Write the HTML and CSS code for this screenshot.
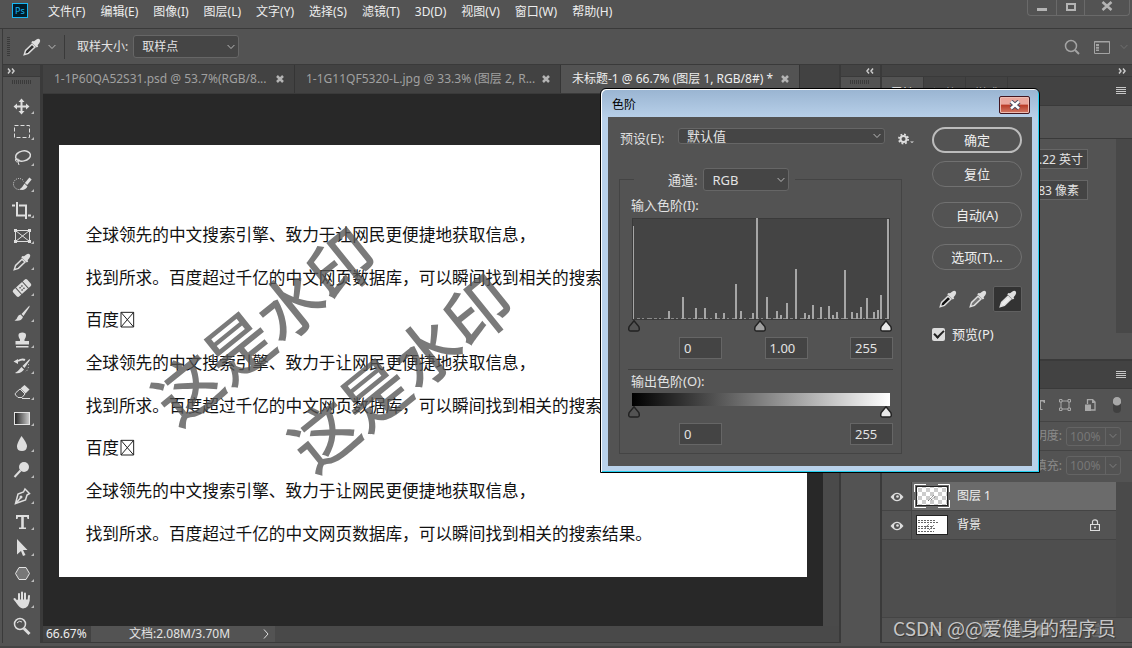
FILE: index.html
```html
<!DOCTYPE html>
<html lang="zh-CN">
<head>
<meta charset="utf-8">
<title>Photoshop</title>
<link rel="stylesheet" href="styles.css">
</head>
<body>
<svg class="defs" width="0" height="0" aria-hidden="true">
  <symbol id="dropper" viewBox="0 0 18 18">
    <path class="fill" d="M11 3.2 13.4 1.4Q15.600 .2 16.800 1.600 17.800 3 16.400 5L14.600 7.200 15.200 8.400 13.800 9.600 8.200 4.200 9.600 2.900Z"/>
    <path class="tube" d="M9 6.200 2.600 12.400 1.300 16.600 5.400 15.400 12 9Z"/>
  </symbol>
  <symbol id="chevron" viewBox="0 0 8 6"><path class="line" d="M.6 1 4 4.500 7.400 1"/></symbol>
  <symbol id="lines" viewBox="0 0 10 8"><path class="line" d="M0 .5H10M0 2.500H10M0 4.500H10M0 6.500H10"/></symbol>
  <symbol id="cross" viewBox="0 0 8 8"><path class="heavy" d="M1 1 7 7M7 1 1 7"/></symbol>
  <symbol id="double" viewBox="0 0 8 6"><path class="heavy thin" d="M1 .5 3 3 1 5.500M5 .5 7 3 5 5.500"/></symbol>
  <symbol id="eye" viewBox="0 0 14 10"><path class="fill" d="M.5 5Q7-3.500 13.500 5 7 13.500 .5 5Z"/><circle cx="7" cy="5" r="3" fill="#535353"/><circle class="fill" cx="7.500" cy="4.500" r="1.300"/></symbol>
  <symbol id="grip" viewBox="0 0 20 4"><path d="M.5 0V4M2.500 0V4M4.500 0V4M6.500 0V4M8.500 0V4M10.500 0V4M12.500 0V4M14.500 0V4M16.500 0V4M18.500 0V4" stroke="#3a3a3a"/></symbol>
  <symbol id="handle" viewBox="0 0 12 12"><path d="M6 .8 10.800 6.500Q12.200 11 9.500 11H2.500Q-.2 11 1.200 6.500Z"/></symbol>
</svg>

<div class="app">
  <header class="menubar">
    <svg class="logo" viewBox="0 0 16 15" role="img" aria-label="Photoshop"><rect x=".5" y=".5" width="15" height="14" fill="#001d2b" stroke="#18b8f5"/><text x="3" y="11">Ps</text></svg>
    <nav class="menus">
      <button>文件(F)</button><button>编辑(E)</button><button>图像(I)</button><button>图层(L)</button><button>文字(Y)</button><button>选择(S)</button><button>滤镜(T)</button><button>3D(D)</button><button>视图(V)</button><button>窗口(W)</button><button>帮助(H)</button>
    </nav>
    <div class="winbtns">
      <button aria-label="最小化"><svg viewBox="0 0 12 12"><path d="M1 8H11V11H1Z" fill="#b4b4b4"/></svg></button>
      <button aria-label="最大化"><svg viewBox="0 0 12 12"><path d="M2 4H10V10H2Z" fill="none" stroke="#b4b4b4" stroke-width="2"/></svg></button>
      <button class="wide" aria-label="关闭"><svg viewBox="0 0 12 12"><path d="M1.500 2 10.500 10M10.500 2 1.500 10" stroke="#b4b4b4" stroke-width="2.500"/></svg></button>
    </div>
  </header>

  <div class="options">
    <span class="vgrip"></span>
    <svg class="i18 cur" aria-hidden="true"><use href="#dropper"/></svg>
    <svg class="chev" aria-hidden="true"><use href="#chevron"/></svg>
    <span class="vsep"></span>
    <label for="sample">取样大小:</label>
    <span class="pick sample"><select id="sample"><option>取样点</option></select><svg class="chev"><use href="#chevron"/></svg></span>
    <span class="grow"></span>
    <button class="plain" aria-label="搜索"><svg class="i16" viewBox="0 0 16 16"><circle cx="7" cy="7" r="5.500" fill="none" stroke="#a3a3a3" stroke-width="1.500"/><path d="M11 11 15 15" stroke="#a3a3a3" stroke-width="2"/></svg></button>
    <button class="plain" aria-label="工作区"><svg class="i16" viewBox="0 0 16 16"><path d="M.5 2.500H15.500V14.500H.5ZM0 3H16" fill="none" stroke="#a3a3a3"/><path d="M3.500 5V12" stroke="#a3a3a3" stroke-width="3" stroke-dasharray="2 .7"/></svg></button>
    <svg class="chev dim" aria-hidden="true"><use href="#chevron"/></svg>
  </div>

  <main class="work">
    <aside class="tools">
      <div class="strip"><svg class="dbl"><use href="#double"/></svg></div>
      <svg class="grip"><use href="#grip"/></svg>
      <button class="tool" aria-label="移动"><svg viewBox="0 0 37 26"><path class="line w2" d="M18.500 8V20M12.500 13.500H24.500"/><path class="fill" d="M18.500 5.500 21.500 9H15.500ZM18.500 21.500 21.500 18H15.500ZM10.500 13.500 14 10.500V16.500ZM26.500 13.500 23 10.500V16.500Z"/></svg></button>
      <button class="tool" aria-label="矩形选框"><svg viewBox="0 0 37 26"><path class="line" stroke-dasharray="4 2" d="M11.500 6.500H26.500V18.500H11.500Z"/></svg></button>
      <button class="tool" aria-label="套索"><svg viewBox="0 0 37 26"><ellipse class="line w15" cx="20" cy="11" rx="7.500" ry="5" transform="rotate(-12 20 11)"/><path class="line" d="M12 14.500Q17 13 16 16 13 18 12.500 15M15 17 16 20"/></svg></button>
      <button class="tool" aria-label="快速选择"><svg viewBox="0 0 37 26"><circle class="line" cx="16" cy="13" r="5.500" stroke-dasharray="1 1.200"/><path class="halo" d="M28 7 21 15"/><path class="line w3" d="M27.500 7.500 23 13"/><path class="fill" d="M21.500 12.500 24.500 15.500Q22 20 16.500 18.500 19 17 21.500 12.500Z"/></svg></button>
      <button class="tool" aria-label="裁剪"><svg viewBox="0 0 37 26"><path class="line w2" d="M9 8.500H12M14 5V18.500H24M16 8.500H23V22M25 18.500H28"/></svg></button>
      <button class="tool" aria-label="图框"><svg viewBox="0 0 37 26"><path class="line" d="M12.500 7.500H26.500V18.500H12.500ZM12.500 7.500 26.500 18.500M26.500 7.500 12.500 18.500"/><path class="fill" d="M11 6H14V9H11ZM25 6H28V9H25ZM11 17H14V20H11ZM25 17H28V20H25Z"/></svg></button>
      <button class="tool" aria-label="吸管"><svg viewBox="0 0 37 26"><use href="#dropper" x="10" y="4" width="18" height="18"/></svg></button>
      <button class="tool" aria-label="修复画笔"><svg viewBox="0 0 37 26"><g transform="rotate(-42 19 13)"><rect class="fill" x="9.500" y="8.500" width="19" height="9" rx="2"/><path d="M14.500 8V18M23.500 8V18" stroke="#535353"/><path d="M17 11.500H21M17 14.500H21" stroke="#535353" stroke-width="1.500" stroke-dasharray="1.500 1"/></g></svg></button>
      <button class="tool" aria-label="画笔"><svg viewBox="0 0 37 26"><path class="fill" d="M26.500 4.500 18.500 13 20.500 15 26.500 6ZM17.500 13.500 20 16Q18 21 11.500 19.500 14 18.500 14.500 16 15.500 13.500 17.500 13.500Z"/></svg></button>
      <button class="tool" aria-label="仿制图章"><svg viewBox="0 0 37 26"><path class="fill" d="M17 12.500Q14.500 8.500 16 6.500 19.500 4.500 22.500 6.500 24 8.500 21.500 12.500V14H26V17.500H12.500V14H17ZM13 19H25.500V20.500H13Z"/></svg></button>
      <button class="tool" aria-label="历史记录画笔"><svg viewBox="0 0 37 26"><path class="line w2" d="M15 8Q19 5.500 22 7"/><path class="fill" d="M10.500 8.500 15 6V11ZM26.500 6 19.500 13 21.500 15 27 7ZM18.500 14 21 16.500Q18 21 12 20 15 18.500 18.500 14Z"/><path class="line" stroke-dasharray="1 2" d="M25.500 11Q26 17 22 19"/></svg></button>
      <button class="tool" aria-label="橡皮擦"><svg viewBox="0 0 37 26"><path class="fill" d="M21.500 6 26.500 10.500 22.500 14.500 17.500 9.500Z"/><path class="line" d="M17 10 22 15 19 18.500H15L12.500 16Q11.500 15 13 13.500ZM19 19.500H27"/></svg></button>
      <button class="tool" aria-label="渐变"><svg viewBox="0 0 37 26"><defs><linearGradient id="gt"><stop offset="0" stop-color="#222"/><stop offset="1" stop-color="#ccc"/></linearGradient></defs><rect x="11.500" y="7.500" width="15" height="12" fill="url(#gt)" stroke="#e3e3e3"/></svg></button>
      <button class="tool" aria-label="模糊"><svg viewBox="0 0 37 26"><path class="fill" d="M18.500 5Q24 12 24 15.500 23.500 20 19 20 14 20 14 15.500 14 12 18.500 5Z"/></svg></button>
      <button class="tool" aria-label="减淡"><svg viewBox="0 0 37 26"><circle class="fill" cx="21" cy="10" r="5"/><path class="line w2" d="M17.500 13.500 11.500 20"/></svg></button>
      <button class="tool" aria-label="钢笔"><svg viewBox="0 0 37 26"><path class="line w15" d="M22 6 26.500 10.500 24 12 22.500 17 12.500 20.500 15 11 20.500 9ZM13 20 17.500 15"/><circle class="fill" cx="18" cy="14" r="1.500"/></svg></button>
      <button class="tool" aria-label="文字"><svg viewBox="0 0 37 26"><path class="fill" d="M13 6H26V10H24.500L24 8H20.800V18.500H23V20H16V18.500H18.200V8H15L14.500 10H13Z"/></svg></button>
      <button class="tool" aria-label="路径选择"><svg viewBox="0 0 37 26"><path class="fill" d="M14 4 24.500 15H20L22.500 20 20 21 18 16 14 19.500Z"/></svg></button>
      <button class="tool" aria-label="多边形"><svg viewBox="0 0 37 26"><path d="M16 6.500H23L26.500 12.500 23 18.500H16L12.500 12.500Z" fill="#777" stroke="#e3e3e3"/></svg></button>
      <button class="tool" aria-label="抓手"><svg viewBox="0 0 37 26"><path class="line w2 round" d="M16 14V7M19 14V5.500M22 14V6.500M25.500 14 26 9M15 16 11.500 12"/><path class="fill" d="M14.800 12.500H26.500Q26.500 21 20 21.500 16.500 21.500 12.500 14.500Z"/></svg></button>
      <button class="tool last" aria-label="缩放"><svg viewBox="0 0 37 26"><circle class="line w15" cx="17" cy="11" r="5.500"/><path class="line" d="M14 10Q16 7 19 9"/><path class="line w3" d="M21 15.500 26.500 21"/></svg></button>
    </aside>

    <section class="doc">
      <div class="tabs">
        <div class="tab t1"><span>1-1P60QA52S31.psd @ 53.7%(RGB/8...</span><button aria-label="关闭"><svg><use href="#cross"/></svg></button></div>
        <div class="tab t2"><span>1-1G11QF5320-L.jpg @ 33.3% (图层 2, R...</span><button aria-label="关闭"><svg><use href="#cross"/></svg></button></div>
        <div class="tab t3 on"><span>未标题-1 @ 66.7% (图层 1, RGB/8#) *</span><button aria-label="关闭"><svg><use href="#cross"/></svg></button></div>
      </div>
      <div class="stage">
        <div class="canvas">
          <svg class="paper" viewBox="0 0 1122 648">
            <rect width="1122" height="648" fill="#fff"/>
            <g class="body">
              <text x="40" y="144">全球领先的中文搜索引擎、致力于让网民更便捷地获取信息，</text>
              <text x="40" y="208">找到所求。百度超过千亿的中文网页数据库，可以瞬间找到相关的搜索结果。</text>
              <text x="40" y="272">百度</text>
              <text x="40" y="336">全球领先的中文搜索引擎、致力于让网民更便捷地获取信息，</text>
              <text x="40" y="400">找到所求。百度超过千亿的中文网页数据库，可以瞬间找到相关的搜索结果。</text>
              <text x="40" y="464">百度</text>
              <text x="40" y="528">全球领先的中文搜索引擎、致力于让网民更便捷地获取信息，</text>
              <text x="40" y="592">找到所求。百度超过千亿的中文网页数据库，可以瞬间找到相关的搜索结果。</text>
            </g>
            <path class="missing" d="M93 251H112V273H93ZM93 251 112 273M112 251 93 273M93 443H112V465H93ZM93 443 112 465M112 443 93 465"/>
            <g class="mark">
              <text transform="translate(178 426) rotate(-39)">这是水印</text>
              <text transform="translate(383 496) rotate(-39)">这是水印</text>
            </g>
          </svg>
        </div>
        <div class="vscroll"></div>
      </div>
      <footer class="status">
        <span class="zoom">66.67%</span>
        <button class="info"><span>文档:2.08M/3.70M</span><svg viewBox="0 0 6 10"><path class="line" d="M1 .5 5 5 1 9.500"/></svg></button>
      </footer>
    </section>

    <aside class="dock">
      <div class="strip end"><svg class="dbl back"><use href="#double"/></svg></div>
      <svg class="grip"><use href="#grip"/></svg>
    </aside>

    <aside class="panels">
      <div class="strip end"><svg class="dbl"><use href="#double"/></svg></div>
      <div class="ptabs"><button class="on">属性</button><button>调整</button><button>样式</button><svg class="lines"><use href="#lines"/></svg></div>
      <div class="props">
        <div class="phead"></div>
        <div class="pbody">
          <div class="fields"><input aria-label="宽度" value="38.22 英寸"><input class="px" aria-label="宽度像素" value="2883 像素"></div>
          <div class="pscroll"></div>
        </div>
      </div>
      <div class="ptabs second"><svg class="lines"><use href="#lines"/></svg></div>
      <div class="filters">
        <svg viewBox="0 0 12 12"><path d="M1 1H11V4H10L9 2.500H7V10H8.500V11H3.500V10H5V2.500H3L2 4H1Z" fill="#a8a8a8"/></svg>
        <svg viewBox="0 0 12 12"><path d="M2 2H10V10H2Z" fill="none" stroke="#a8a8a8"/><path d="M.5 .5H3V3H.5ZM9 .5H11.500V3H9ZM.5 9H3V11.500H.5ZM9 9H11.500V11.500H9Z" fill="#535353" stroke="#a8a8a8"/></svg>
        <svg viewBox="0 0 12 12"><path d="M3.500 5V.5H8.500L11 3V11H7" fill="none" stroke="#a8a8a8" stroke-width="1.300"/><path d="M1 5.500H7V12H1ZM8 0 11.500 4H8Z" fill="#a8a8a8"/></svg>
        <span class="toggle"></span>
      </div>
      <div class="prop"><label for="op">不透明度:</label><span class="pct"><input id="op" value="100%" disabled><svg class="chev"><use href="#chevron"/></svg></span></div>
      <div class="prop fillrow"><label for="fi">填充:</label><span class="pct"><input id="fi" value="100%" disabled><svg class="chev"><use href="#chevron"/></svg></span></div>
      <div class="layers">
        <div class="list">
          <div class="layer sel"><span class="see"><svg><use href="#eye"/></svg></span><div class="name">
            <svg class="thumb" viewBox="0 0 36 24"><defs><pattern id="chk" width="8" height="8" patternUnits="userSpaceOnUse"><rect width="8" height="8" fill="#fff"/><path d="M0 0H4V4H0ZM4 4H8V8H4Z" fill="#ccc"/></pattern></defs><rect x="2.500" y="2.500" width="31" height="19" fill="url(#chk)" stroke="#222"/><path d="M14 17 20 11M17 16 22 12" stroke="#777" stroke-dasharray="2 1"/><path d="M.5 8V.5H12M24 .5H35.500V8M35.500 16V23.500H24M12 23.500H.5V16" fill="none" stroke="#fff"/></svg>
            <span>图层 1</span></div></div>
          <div class="layer"><span class="see"><svg><use href="#eye"/></svg></span><div class="name">
            <svg class="thumb" viewBox="0 0 36 24"><rect x="2.500" y="2.500" width="31" height="19" fill="#fff" stroke="#222"/><path d="M4 7.500H21M4 9.500H24M4 13.500H18M4 15.500H21M4 18.500H20" stroke="#666" stroke-dasharray="2 1"/><path d="M10 16 15 11M15 17 20 12" stroke="#888"/></svg>
            <span>背景</span><svg class="lock" viewBox="0 0 10 12"><path d="M.5 5.500H9.500V11.500H.5ZM2.500 5V3Q2.500 .8 5 .8T7.500 3V5" fill="none" stroke="#ddd" stroke-width="1.200"/><circle cx="5" cy="8.500" r="1" fill="#ddd"/></svg></div></div>
        </div>
        <div class="lscroll"></div>
      </div>
      <footer class="pfoot">
        <svg viewBox="0 0 16 14"><path d="M7 4H4Q1 4 1 7T4 10H7M9 4H12Q15 4 15 7T12 10H9M5 7H11"/></svg>
        <svg viewBox="0 0 16 14"><path d="M1 13Q4 13 5 7T9 1M2 6H8M9 6 14 12M14 6 8 12"/></svg>
        <svg viewBox="0 0 16 14"><path class="solid" d="M1 1H15V13H1Z"/><circle cx="8" cy="7" r="3" fill="#535353"/></svg>
        <svg viewBox="0 0 16 14"><circle cx="8" cy="7" r="6"/><path class="solid" d="M3 11 12 2Q16 8 11 12 6 14 3 11Z"/></svg>
        <svg viewBox="0 0 16 14"><path class="solid" d="M1 12V2H6L8 4H15V12Z"/></svg>
        <svg viewBox="0 0 16 14"><path d="M2 1H14V13H2ZM8 4V10M5 7H11"/></svg>
        <svg viewBox="0 0 16 14"><path d="M3 3H13M4 3V13H12V3M6 1H10M7 5V11M9 5V11"/></svg>
      </footer>
    </aside>
  </main>
  <div class="base"></div>
  <div class="credit">CSDN @@爱健身的程序员</div>

  <div class="dialog" role="dialog" aria-label="色阶">
    <div class="title"><span>色阶</span><button class="dclose" aria-label="关闭"><svg viewBox="0 0 12 10"><path d="M2 1.500 10 8.500M10 1.500 2 8.500" stroke="#4b4b60" stroke-width="4.500"/><path d="M2 1.500 10 8.500M10 1.500 2 8.500" stroke="#fff" stroke-width="2.500"/></svg></button></div>
    <div class="dbody">
      <div class="left">
        <div class="preset">
          <label for="preset">预设(E):</label>
          <span class="pick"><select id="preset"><option>默认值</option></select><svg class="chev"><use href="#chevron"/></svg></span>
          <button class="plain gearbtn" aria-label="预设选项"><svg class="gear" viewBox="0 0 16 12"><circle cx="5.500" cy="6" r="3" fill="none" stroke="#ddd" stroke-width="2"/><circle cx="5.500" cy="6" r="4.600" fill="none" stroke="#ddd" stroke-width="1.800" stroke-dasharray="1.800 1.810"/><path d="M12 8.500H16L14 10Z" fill="#ddd"/></svg></button>
        </div>
        <fieldset>
          <legend><label for="chan">通道:</label><span class="pick chan"><select id="chan"><option>RGB</option></select><svg class="chev"><use href="#chevron"/></svg></span></legend>
          <div class="lab">输入色阶(I):</div>
          <svg class="hist" viewBox="0 0 258 102" preserveAspectRatio="none" role="img" aria-label="直方图">
            <rect x=".5" y=".5" width="257" height="101" fill="#444" stroke="#3a3a3a"/>
            <path d="M1.500 8V101" stroke="#a6a6a6"/>
            <path d="M5 100.500H256" stroke="#8a8a8a" stroke-dasharray="3 2 2 3 5 2"/>
            <path d="M37 93V101M51 79V101M64 90V101M73 90V101M84 95V101M92 95V101M104 66V101M109 93V101M121 95V101M125 0V101M135 79V101M145 93V101M149 97V101M155 85V101M164 51V101M173 95V101M177 97V101M181 87V101M189 89V101M197 88V101M201 97V101M205 94V101M213 52V101M220 94V101M225 95V101M229 89V101M235 80V101M242 94V101M246 92V101M249 77V101M256 1V101" stroke="#a6a6a6" stroke-width="2"/>
          </svg>
          <div class="handles"><svg class="b"><use href="#handle"/></svg><svg class="g"><use href="#handle"/></svg><svg class="w"><use href="#handle"/></svg></div>
          <div class="nums"><input aria-label="输入阴影" value="0"><input aria-label="输入中间调" value="1.00" class="mid"><input aria-label="输入高光" value="255"></div>
          <hr>
          <div class="lab out">输出色阶(O):</div>
          <div class="ramp"></div>
          <div class="handles"><svg class="b"><use href="#handle"/></svg><svg class="w"><use href="#handle"/></svg></div>
          <div class="nums"><input aria-label="输出阴影" value="0"><input aria-label="输出高光" value="255"></div>
        </fieldset>
      </div>
      <div class="right">
        <button class="pill main">确定</button>
        <button class="pill">复位</button>
        <button class="pill auto">自动(A)</button>
        <button class="pill opt">选项(T)...</button>
        <div class="drops">
          <button class="black" aria-label="设置黑场"><svg class="i18"><use href="#dropper"/></svg></button>
          <button class="gray" aria-label="设置灰场"><svg class="i18"><use href="#dropper"/></svg></button>
          <button class="white on" aria-label="设置白场"><svg class="i18"><use href="#dropper"/></svg></button>
        </div>
        <label class="check"><input type="checkbox" checked><span>预览(P)</span></label>
      </div>
    </div>
  </div>
</div>
</body>
</html>
```
FILE: styles.css
```css
* { box-sizing: border-box; }
body { margin: 0; background: #535353; color: #e3e3e3; font: 12px/16px "Noto Sans", "Noto Sans CJK SC", sans-serif; }
button, input, select { font: inherit; color: inherit; margin: 0; padding: 0; border: 0; background: none; border-radius: 0; }
select { appearance: none; outline: 0; width: 100%; height: 100%; }
svg { display: block; flex: none; }
.defs { position: absolute; }
.fill { fill: #dedede; }
.line { fill: none; stroke: #dedede; }
.w15 { stroke-width: 1.5; }
.w2 { stroke-width: 2; }
.w3 { stroke-width: 3; }
.round { stroke-linecap: round; }
.halo { stroke: #535353; stroke-width: 6; }
.heavy { fill: none; stroke: currentColor; stroke-width: 2.5; }
.thin { stroke-width: 1.5; }
.tube { fill: var(--tube, none); stroke: #dedede; stroke-width: 1.5; }
.i18 { width: 18px; height: 18px; }
.i16 { width: 16px; height: 16px; }
.chev { width: 8px; height: 6px; opacity: .75; }
.chev.dim { opacity: .2; }
.grow { flex: 1; }
.plain { display: block; }

.app { min-height: 100vh; display: flex; flex-direction: column; position: relative; overflow: hidden; }
.menubar { height: 29px; flex: none; display: flex; align-items: flex-start; padding-left: 12px; border-bottom: 1px solid #3a3a3a; }
.logo { width: 16px; height: 15px; margin: 3px 20px 0 0; }
.logo text { font: 9px "Noto Sans", sans-serif; fill: #18b8f5; }
.menus { display: flex; gap: 15px; padding-top: 4px; flex: 1; color: #eee; }
.menus button { white-space: nowrap; }
.winbtns { display: flex; border: 1px solid #6a6a6a; border-top: 0; border-radius: 0 0 4px 4px; height: 16px; margin-right: 2px; }
.winbtns button { width: 28px; display: flex; justify-content: center; border-left: 1px solid #6a6a6a; }
.winbtns button:first-child { border-left: 0; }
.winbtns .wide { width: 45px; }
.winbtns svg { width: 12px; height: 12px; }

.options { height: 36px; flex: none; display: flex; align-items: center; padding: 0 4px 0 7px; margin-left: 2px; border-left: 1px solid #3a3a3a; border-bottom: 1px solid #3a3a3a; }
.vgrip { width: 3px; height: 20px; margin-left: -3px; background: repeating-linear-gradient(#3a3a3a 0 1px, transparent 1px 2px); }
.cur { margin: 0 7px 0 13px; --tube: #333; }
.vsep { width: 1px; height: 24px; background: #3a3a3a; margin: 0 12px 0 8px; }
.pick { display: flex; align-items: center; position: relative; background: #454545; border: 1px solid #666; border-radius: 3px; }
.pick .chev { position: absolute; right: 3px; pointer-events: none; }
.sample { width: 106px; height: 23px; margin-left: 5px; }
.sample select { padding-left: 8px; }
.options .plain { margin-right: 14px; }
.options .plain + .plain { margin-right: 10px; }

.work { flex: 1; display: flex; margin-left: 2px; border-left: 1px solid #3a3a3a; }
.strip { height: 12px; background: #444; display: flex; align-items: center; padding: 0 4px; color: #ccc; border-bottom: 1px solid #3a3a3a; }
.strip.end { justify-content: flex-end; padding-right: 6px; }
.dbl { width: 8px; height: 6px; }
.back { transform: scaleX(-1); }
.grip { width: 20px; height: 4px; margin: 3px 9px 0; }
.tools { width: 37px; flex: none; }
.tools .grip { margin-bottom: 9px; }
.tool { display: block; position: relative; width: 37px; height: 26px; --tube: none; }
.tool svg { width: 37px; height: 26px; }
.tool::after { content: ""; position: absolute; right: 6px; bottom: 5px; border: solid transparent; border-width: 3px 0 0 3px; border-bottom: 0; border-right: 3px solid #bbb; }
.tool.last::after { display: none; }

.doc { flex: 1; min-width: 0; display: flex; flex-direction: column; border: solid #3a3a3a; border-width: 0 2px 0 3px; }
.tabs { height: 29px; display: flex; background: #424242; border-bottom: 1px solid #3a3a3a; color: #a0a0a0; }
.tab { display: flex; align-items: center; justify-content: space-between; padding: 0 10px 0 11px; border-right: 1px solid #353535; white-space: nowrap; }
.t1 { width: 252px; }
.t2 { width: 266px; }
.t3 { width: 239px; }
.tab.on { background: #535353; color: #eee; }
.tab svg { width: 8px; height: 8px; color: #b4b4b4; }
.stage { flex: 1; display: flex; background: #282828; }
.canvas { flex: 1; min-width: 0; padding: 51px 16px 49px; }
.paper { width: 100%; height: auto; }
.body { font: 25px "Noto Sans CJK SC", sans-serif; fill: #111; }
.missing { fill: none; stroke: #222; stroke-width: 1.5; }
.mark { font: 500 99px "Noto Sans CJK SC", sans-serif; fill: #555; opacity: .78; }
.vscroll { width: 16px; background: #4a4a4a; }
.status { height: 17px; display: flex; background: #494949; border-bottom: 1px solid #3a3a3a; }
.zoom { width: 48px; padding-left: 3px; color: #eee; background: #424242; }
.info { width: 184px; display: flex; align-items: center; justify-content: space-between; padding: 0 6px 0 38px; background: #535353; }
.info svg { width: 6px; height: 10px; }

.dock { width: 39px; flex: none; }
.panels { width: 252px; flex: none; display: flex; flex-direction: column; border-left: 2px solid #3a3a3a; border-bottom: 1px solid #3a3a3a; }
.ptabs { height: 29px; flex: none; display: flex; background: #424242; border-bottom: 1px solid #3a3a3a; }
.ptabs button { width: 42px; padding-top: 5px; border-right: 1px solid #3a3a3a; color: #a0a0a0; }
.ptabs button.on { background: #535353; color: #eee; }
.lines { width: 10px; height: 8px; margin: 10px 6px 0 auto; opacity: .85; }
.props { height: 253px; flex: none; display: flex; flex-direction: column; }
.phead { height: 33px; border-bottom: 1px solid #3a3a3a; }
.pbody { flex: 1; display: flex; }
.fields { flex: 1; display: flex; flex-direction: column; align-items: flex-end; gap: 11px; padding: 10px 28px 0 0; }
.fields input { width: 70px; height: 20px; background: #444; border: 1px solid #666; padding-right: 4px; text-align: right; }
.fields .px { padding-right: 8px; }
.pscroll { width: 16px; height: 194px; background: #484848; }
.second { height: 30px; border-top: 2px solid #3a3a3a; }
.filters { height: 33px; flex: none; display: flex; align-items: center; justify-content: flex-end; gap: 13px; padding-right: 11px; border-bottom: 1px solid #444; }
.filters svg { width: 12px; height: 12px; }
.toggle { width: 8px; height: 16px; margin-left: 4px; border-radius: 4px; background: radial-gradient(circle at 4px 4px, #a8a8a8 4px, #404040 5px); }
.prop { height: 29px; flex: none; display: flex; align-items: center; justify-content: flex-end; gap: 4px; padding-right: 11px; color: #8a8a8a; border-bottom: 1px solid #444; }
.pct { width: 55px; height: 19px; display: flex; align-items: center; border: 1px solid #646464; border-radius: 3px; color: #777; }
.pct input { width: 39px; height: 17px; padding-left: 3px; border-right: 1px solid #646464; }
.pct .chev { margin-left: 3px; opacity: .3; }
.fillrow { height: 31px; border: 0; padding-bottom: 2px; }
.layers { flex: 1; display: flex; background: #4e4e4e; border-bottom: 1px solid #444; }
.list { flex: 1; }
.layer { height: 29px; display: flex; background: #535353; border-bottom: 1px solid #444; }
.see { width: 30px; padding: 10px 8px; border-right: 1px solid #444; }
.see svg { width: 14px; height: 10px; }
.name { flex: 1; display: flex; align-items: center; padding-left: 2px; gap: 7px; color: #eee; }
.sel .name { background: #6b6b6b; }
.thumb { width: 36px; height: 24px; }
.lock { width: 10px; height: 12px; margin: 0 16px 0 auto; }
.lscroll { width: 16px; background: #4a4a4a; }
.pfoot { height: 24px; flex: none; display: flex; justify-content: flex-end; align-items: center; gap: 11px; padding-right: 27px; }
.pfoot svg { width: 16px; height: 14px; fill: none; stroke: #808080; }
.pfoot .solid { fill: #808080; }
.base { height: 5px; flex: none; border-bottom: 2px solid #444; }
.credit { position: absolute; right: 16px; bottom: 7px; font: 19px/26px "Noto Sans CJK SC", sans-serif; color: #c6c6c6; text-shadow: 1px 1px 1px #333; }

.dialog { position: absolute; left: 600px; top: 88px; width: 440px; font-size: 13px; padding: 0 7px 6px; background: linear-gradient(#99b4d1, #b9d1ea 30px); border: 1px solid #000; border-radius: 6px 6px 0 0; box-shadow: inset 1px 1px #fff, inset -1px -1px #23d0f0; }
.title { height: 28px; display: flex; align-items: center; justify-content: space-between; padding: 4px 2px 0 4px; font-size: 12px; color: #000; }
.dclose { width: 31px; height: 18px; display: flex; align-items: center; justify-content: center; border: 1px solid #431620; border-radius: 2px; background: linear-gradient(#eba79d 0 45%, #b93a26 50%, #d27a66); box-shadow: inset 0 0 0 1px #eebdb3; }
.dclose svg { width: 12px; height: 10px; }
.dbody { display: flex; justify-content: space-between; padding: 10px 10px 12px 12px; background: #535353; }
.left { width: 296px; }
.preset { display: flex; align-items: center; height: 24px; }
.preset label { width: 58px; padding-bottom: 2px; color: #ddd; }
.preset .pick { width: 207px; height: 16px; margin-bottom: 6px; }
.preset select { padding-left: 8px; line-height: 14px; }
.gearbtn { margin-left: 13px; }
.gear { width: 16px; height: 12px; }
fieldset { width: 283px; margin: 17px 0 0 -1px; padding: 0 8px 8px 8px; border: 1px solid #444; }
legend { display: flex; align-items: center; gap: 6px; margin-left: 6px; padding: 0 6px 0 34px; height: 23px; }
.chan { width: 86px; height: 23px; }
.chan select { padding-left: 8px; }
.lab { height: 27px; padding: 6px 0 0 3px; }
.hist { width: 258px; height: 102px; margin-left: 4px; }
.handles { display: flex; justify-content: space-between; width: 264px; height: 12px; }
.handles svg { width: 12px; height: 12px; stroke: #222; stroke-width: 1.5; }
.b { fill: #535353; }
.g { fill: #a0a0a0; }
.w { fill: #e8e8e8; }
.nums { display: flex; justify-content: space-between; padding-left: 51px; margin-top: 5px; }
.nums input { width: 43px; height: 22px; padding-left: 4px; background: #444; border: 1px solid #666; }
fieldset hr { margin: 10px 0 0; border: 0; border-top: 1px solid #3e3e3e; }
.out { height: 23px; padding-top: 3px; }
.ramp { height: 13px; width: 258px; margin-left: 4px; background: linear-gradient(90deg, #000, #fff); }
.right { width: 90px; display: flex; flex-direction: column; color: #eee; }
.pill { height: 26px; border: 1px solid #717171; border-radius: 13px; margin-bottom: 8px; }
.main { border: 2px solid #bcbcbc; }
.auto { margin: 7px 0 16px; }
.opt { margin-bottom: 16px; }
.drops { display: flex; justify-content: flex-end; gap: 1px; }
.drops button { width: 29px; height: 26px; display: flex; align-items: center; justify-content: center; }
.drops .on { background: #333; border: 1px solid #606060; border-radius: 2px; }
.black { --tube: #111; }
.gray { --tube: #777; }
.white { --tube: #eee; }
.check { display: flex; align-items: center; gap: 7px; margin-top: 14px; }
.check input { appearance: none; width: 13px; height: 13px; border-radius: 2px; background: #dcdcdc; display: grid; place-items: center; }
.check input:checked::before { content: ""; width: 8px; height: 4px; border: solid #222; border-width: 0 0 2px 2px; transform: translateY(-1px) rotate(-45deg); }
```
